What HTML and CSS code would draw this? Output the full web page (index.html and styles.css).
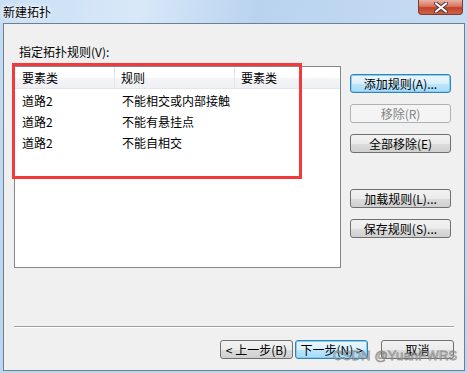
FILE: index.html
```html
<!DOCTYPE html>
<html lang="zh">
<head>
<meta charset="utf-8">
<link rel="stylesheet" href="styles.css">
</head>
<body>
<div class="window">
  <div class="titlebar">
    <span class="title">新建拓扑</span>
    <div class="close">
      <svg width="16" height="11" viewBox="0 0 16 11"><path d="M3 1.5 L13 9.5 M13 1.5 L3 9.5" stroke="#4a3a38" stroke-width="4" stroke-linecap="round"/><path d="M3 1.5 L13 9.5 M13 1.5 L3 9.5" stroke="#fff" stroke-width="2.2" stroke-linecap="round"/></svg>
    </div>
  </div>
  <div class="client">
    <div class="label">指定拓扑规则(V):</div>
    <div class="main">
      <div class="listbox">
        <div class="lhead">
          <div class="c1">要素类</div>
          <div class="c2">规则</div>
          <div class="c3">要素类</div>
        </div>
        <div class="lrow"><div class="c1">道路2</div><div class="c2">不能相交或内部接触</div><div class="c3"></div></div>
        <div class="lrow"><div class="c1">道路2</div><div class="c2">不能有悬挂点</div><div class="c3"></div></div>
        <div class="lrow"><div class="c1">道路2</div><div class="c2">不能自相交</div><div class="c3"></div></div>
      </div>
      <div class="side">
        <div class="btn focus">添加规则(A)...</div>
        <div class="btn disabled">移除(R)</div>
        <div class="btn">全部移除(E)</div>
        <div class="btn g2">加载规则(L)...</div>
        <div class="btn">保存规则(S)...</div>
      </div>
    </div>
    <div class="sep"></div>
    <div class="bottom">
      <div class="btn wide">&lt; 上一步(B)</div>
      <div class="btn wide focus">下一步(N) &gt;</div>
      <div class="btn wide cancel">取消</div>
    </div>
    <div class="redbox"></div>
    <div class="watermark">CSDN @YuanFWRS</div>
  </div>
</div>
</body>
</html>
```
FILE: styles.css
```css
html, body {
  margin: 0;
  padding: 0;
}
body {
  width: 467px;
  height: 373px;
  overflow: hidden;
  background: linear-gradient(to bottom, #c4dbf3 0%, #bcd5f0 100%);
  font-family: "Noto Sans CJK SC", "Liberation Sans", sans-serif;
  font-size: 12px;
  color: #000;
}
.window {
  width: 467px;
  height: 373px;
  display: flex;
  flex-direction: column;
}
.titlebar {
  height: 23px;
  position: relative;
  background: linear-gradient(100deg, #c9dff5 0%, #d8e8f8 30%, #b9d3ef 55%, #c6dcf3 100%);
}
.title {
  position: absolute;
  left: 3px;
  top: 3px;
  line-height: 18px;
  font-size: 12px;
  text-shadow: 0 0 4px #fff, 0 0 6px #fff;
}
.close {
  position: absolute;
  left: 418px;
  top: 0;
  width: 45px;
  height: 15px;
  box-sizing: border-box;
  border: 1px solid #7a3b30;
  border-top: none;
  border-radius: 0 0 4px 4px;
  background: linear-gradient(to bottom, #e9b2a4 0%, #d9765f 45%, #c2412a 55%, #d0614a 100%);
  display: flex;
  align-items: center;
  justify-content: center;
}
.client {
  position: relative;
  margin: 0 2px 2px 3px;
  flex: 1;
  border: 1px solid #6d7f92;
  background: #f0f0f0;
  display: flex;
  flex-direction: column;
  padding: 0 10px 0 10px;
}
.label {
  margin-top: 19px;
  padding-left: 5px;
  line-height: 18px;
  height: 18px;
}
.main {
  margin-top: 5px;
  display: flex;
  height: 202px;
}
.listbox {
  width: 327px;
  height: 202px;
  box-sizing: border-box;
  border: 1px solid #828790;
  background: #fff;
}
.lhead {
  display: flex;
  height: 22px;
  box-sizing: border-box;
  border-bottom: 1px solid #e5e5e5;
  background: linear-gradient(to bottom, #ffffff 0%, #ffffff 50%, #f4f5f7 51%, #eef0f3 100%);
  line-height: 21px;
}
.lhead .c1, .lhead .c2 {
  border-right: 1px solid #e3e5e8;
}
.c1 {
  width: 100px;
  padding-left: 7px;
  box-sizing: border-box;
}
.c2 {
  width: 120px;
  padding-left: 6px;
  box-sizing: border-box;
}
.c3 {
  flex: 1;
  padding-left: 6px;
}
.lrow {
  display: flex;
  height: 21px;
  line-height: 21px;
}
.lhead + .lrow { margin-top: 1px; }
.lrow .c2 { padding-left: 7px; }
.side {
  margin-left: 9px;
  padding-top: 8px;
  display: flex;
  flex-direction: column;
  gap: 11px;
}
.btn {
  width: 101px;
  height: 19px;
  box-sizing: border-box;
  border: 1px solid #707070;
  border-radius: 3px;
  background: linear-gradient(to bottom, #f2f2f2 0%, #ebebeb 50%, #dddddd 51%, #cfcfcf 100%);
  line-height: 17px;
  text-align: center;
  font-size: 12px;
  white-space: nowrap;
}
.btn.focus {
  border-color: #3c7fb1;
  background: linear-gradient(to bottom, #eaf6fd 0%, #d9f0fc 50%, #bee6fd 51%, #a7d9f5 100%);
  box-shadow: inset 0 0 0 1px #7fd0f8;
}
.btn.disabled {
  border-color: #adb2b5;
  background: #f4f4f4;
  color: #838383;
}
.btn.g2 {
  margin-top: 25px;
}
.sep {
  margin-top: 58px;
  height: 1px;
  border-top: 1px solid #a0a0a0;
  background: #fff;
}
.bottom {
  margin-top: 12px;
  display: flex;
  padding-left: 206px;
  gap: 2px;
}
.btn.wide {
  width: 73px;
}
.btn.cancel {
  margin-left: 11px;
}
.redbox {
  position: absolute;
  left: 8px;
  top: 39px;
  width: 290px;
  height: 116px;
  box-sizing: border-box;
  border: 3px solid #f03a3c;
  pointer-events: none;
}
.watermark {
  position: absolute;
  left: 329px;
  top: 324px;
  font-family: "Liberation Sans", sans-serif;
  font-size: 13px;
  line-height: 15px;
  color: rgba(255, 255, 255, 0.5);
  -webkit-text-stroke: 0.8px rgba(100, 100, 100, 0.65);
  letter-spacing: 0.2px;
  pointer-events: none;
}
```
